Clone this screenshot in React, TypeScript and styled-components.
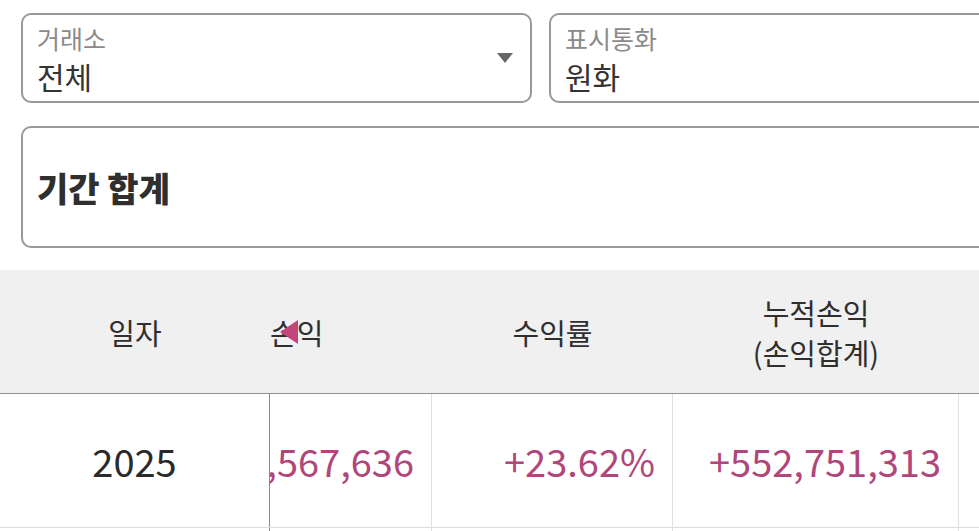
import React from "react";
import styled, { createGlobalStyle } from "styled-components";

const GlobalStyle = createGlobalStyle`
  html, body {
    margin: 0;
    padding: 0;
    background: #fff;
    overflow: hidden;
  }
  body {
    font-family: "Noto Sans CJK KR", "Noto Sans", sans-serif;
    color: #333;
  }
`;

const COLS = "270px 162px 241px 286px 240px";

const Page = styled.div`
  width: 979px;
  height: 531px;
  overflow: hidden;
  padding-top: 13px;
  box-sizing: border-box;
`;

const Filters = styled.div`
  display: flex;
  gap: 17px;
  padding-left: 21px;
`;

const SelectBox = styled.div`
  flex: 0 0 511px;
  height: 90px;
  box-sizing: border-box;
  border: 2px solid #999;
  border-radius: 10px;
  padding: 0 14px;
  display: flex;
  align-items: center;
  justify-content: space-between;
`;

const SelectText = styled.div`
  display: flex;
  flex-direction: column;
`;

const SelectLabel = styled.span`
  font-size: 25px;
  line-height: 36px;
  color: #8a8a8a;
`;

const SelectValue = styled.span`
  font-size: 30px;
  line-height: 40px;
  color: #333;
`;

const Caret = styled.span`
  width: 0;
  height: 0;
  border-left: 8px solid transparent;
  border-right: 8px solid transparent;
  border-top: 10px solid #666;
  margin-right: 3px;
`;

const SummaryBox = styled.div`
  margin: 23px 0 0 21px;
  width: 1039px;
  height: 122px;
  box-sizing: border-box;
  border: 2px solid #999;
  border-radius: 10px;
  padding: 0 14px;
  display: flex;
  align-items: center;
`;

const SummaryTitle = styled.h2`
  margin: 0;
  font-size: 34px;
  font-weight: 900;
  color: #2f2f2f;
`;

const Table = styled.div`
  margin-top: 22px;
  position: relative;
  width: 1199px;
`;

const HeadRow = styled.div`
  display: grid;
  grid-template-columns: ${COLS};
  height: 123px;
  background: #f0f0f0;
  border-bottom: 1px solid #8f8f8f;
`;

const HeadCell = styled.div<{ $align?: "start" | "center" }>`
  display: flex;
  align-items: center;
  justify-content: ${(p) => (p.$align === "start" ? "flex-start" : "center")};
  text-align: center;
  font-size: 29px;
  line-height: 40px;
  color: #2f2f2f;
  overflow: hidden;
  white-space: pre-line;
`;

const BodyRow = styled.div`
  display: grid;
  grid-template-columns: ${COLS};
  height: 133px;
  border-bottom: 1px solid #ddd;
`;

const Cell = styled.div<{ $frozen?: boolean; $num?: boolean }>`
  display: flex;
  align-items: center;
  justify-content: ${(p) => (p.$num ? "flex-end" : "center")};
  padding: 0 ${(p) => (p.$num ? "17px" : "0")} 0 0;
  border-right: 1px solid ${(p) => (p.$frozen ? "#8a8a8a" : "#e0e0e0")};
  font-size: 38px;
  color: ${(p) => (p.$num ? "#b0467a" : "#2a2a2a")};
  overflow: hidden;
  white-space: nowrap;
`;

const ScrollHint = styled.span`
  position: absolute;
  left: 280px;
  top: 50px;
  width: 0;
  height: 0;
  border-top: 12px solid transparent;
  border-bottom: 12px solid transparent;
  border-right: 18px solid #c2457c;
`;

const rows = [
  { date: "2025", pnl: ",567,636", rate: "+23.62%", total: "+552,751,313" },
];

export default function App() {
  return (
    <>
      <GlobalStyle />
      <Page>
        <Filters>
          <SelectBox>
            <SelectText>
              <SelectLabel>거래소</SelectLabel>
              <SelectValue>전체</SelectValue>
            </SelectText>
            <Caret />
          </SelectBox>
          <SelectBox>
            <SelectText>
              <SelectLabel>표시통화</SelectLabel>
              <SelectValue>원화</SelectValue>
            </SelectText>
          </SelectBox>
        </Filters>

        <SummaryBox>
          <SummaryTitle>기간 합계</SummaryTitle>
        </SummaryBox>

        <Table>
          <HeadRow>
            <HeadCell>일자</HeadCell>
            <HeadCell $align="start">손익</HeadCell>
            <HeadCell>수익률</HeadCell>
            <HeadCell>{"누적손익\n(손익합계)"}</HeadCell>
            <HeadCell />
          </HeadRow>
          {rows.map((r) => (
            <BodyRow key={r.date}>
              <Cell $frozen>{r.date}</Cell>
              <Cell $num>{r.pnl}</Cell>
              <Cell $num>{r.rate}</Cell>
              <Cell $num>{r.total}</Cell>
              <Cell />
            </BodyRow>
          ))}
          <BodyRow>
            <Cell $frozen />
            <Cell $num />
            <Cell $num />
            <Cell $num />
            <Cell />
          </BodyRow>
          <ScrollHint />
        </Table>
      </Page>
    </>
  );
}
